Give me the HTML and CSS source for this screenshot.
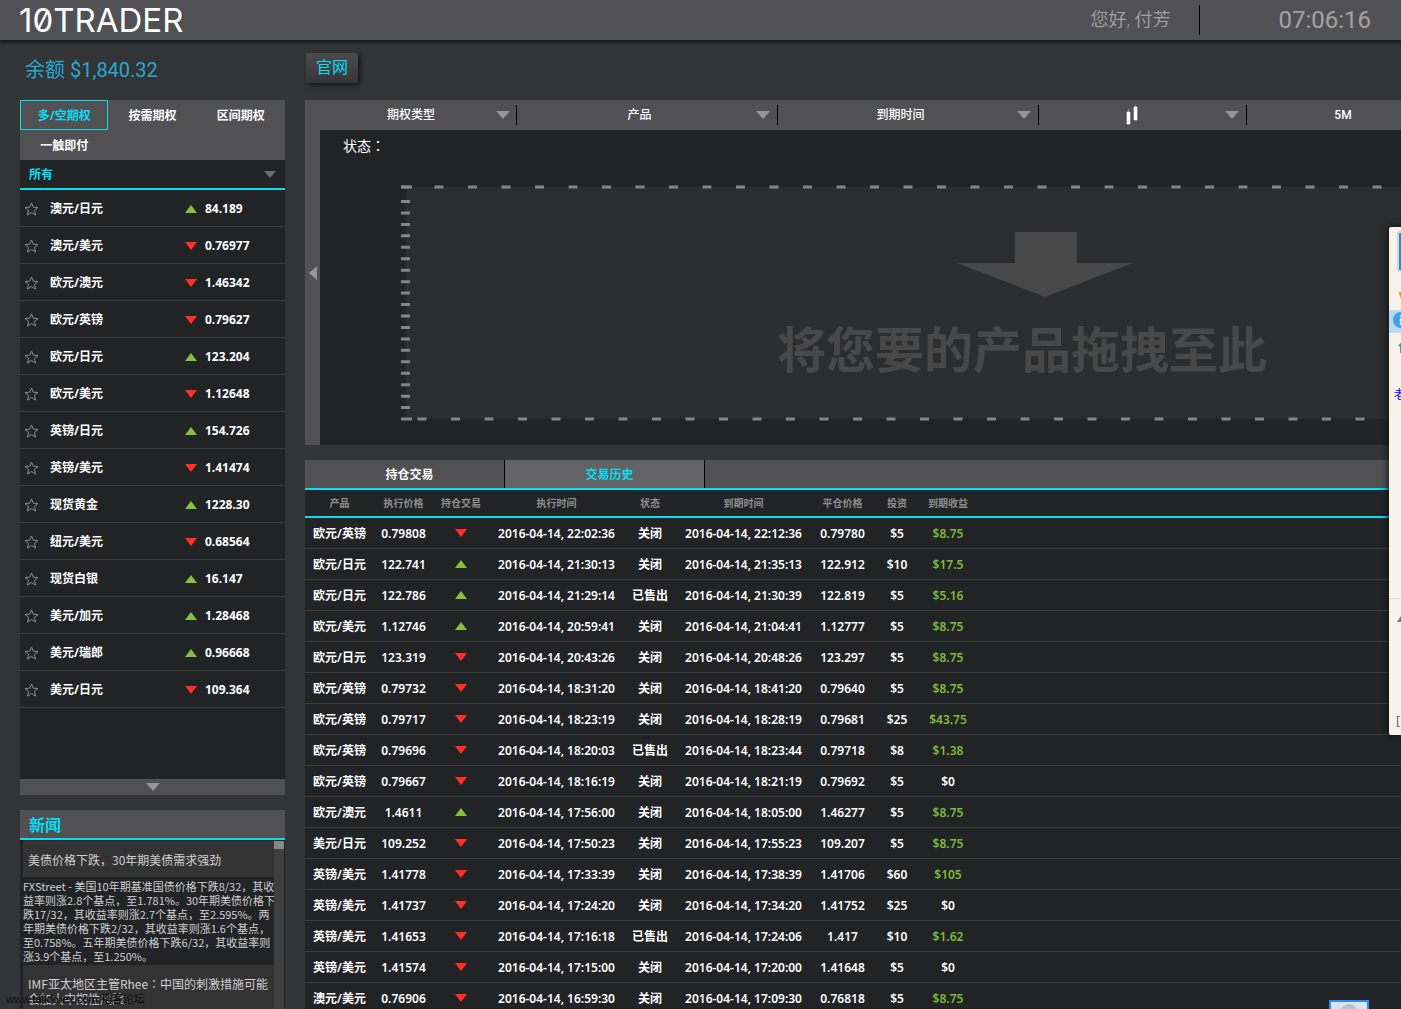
FILE: index.html
```html
<!DOCTYPE html>
<html lang="zh-CN">
<head>
<meta charset="utf-8">
<meta name="viewport" content="width=device-width, initial-scale=1">
<title>10TRADER</title>
<link rel="stylesheet" href="styles.css">
</head>
<body>
<header class="topbar">
  <a class="logo" href="#">10TRADER</a>
  <span class="greeting">您好, 付芳</span>
  <time class="clock">07:06:16</time>
</header>

<div class="layout">
  <aside class="sidebar">
    <div class="balance">余额 $1,840.32</div>

    <section class="assets">
      <nav class="types">
        <button class="type type-active">多/空期权</button>
        <button class="type">按需期权</button>
        <button class="type">区间期权</button>
        <button class="type">一触即付</button>
      </nav>
      <div class="filter">
        <select class="filter-select" aria-label="资产筛选"><option>所有</option></select>
        <svg class="filter-arrow" viewBox="0 0 12 7"><path d="M0 0H12L6 7Z"/></svg>
      </div>
      <ul class="quotes" id="quotes"></ul>
      <button class="more" aria-label="更多"><svg class="arrow" viewBox="0 0 14 8"><path d="M0 0H14L7 8Z"/></svg></button>
    </section>

    <section class="news">
      <h2 class="news-head">新闻</h2>
      <div class="news-body">
        <div class="news-list">
          <h3 class="news-title">美债价格下跌，30年期美债需求强劲</h3>
          <p class="news-text">FXStreet - 美国10年期基准国债价格下跌8/32，其收<br>益率则涨2.8个基点，至1.781%。30年期美债价格下<br>跌17/32，其收益率则涨2.7个基点，至2.595%。两<br>年期美债价格下跌2/32，其收益率则涨1.6个基点，<br>至0.758%。五年期美债价格下跌6/32，其收益率则<br>涨3.9个基点，至1.250%。</p>
          <h3 class="news-title">IMF亚太地区主管Rhee<span class="colon" lang="zh-TW">：</span>中国的刺激措施可能<br>会加大中期性风险</h3>
        </div>
        <div class="scroll"><div class="scroll-thumb"></div></div>
      </div>
    </section>
  </aside>

  <main class="main">
    <div class="site-row"><button class="site">官网</button></div>

    <section class="chart">
      <div class="tools">
        <div class="tool tool-first">
          <select class="tool-select" aria-label="期权类型"><option>期权类型</option></select>
          <svg class="arrow" viewBox="0 0 14 8"><path d="M0 0H14L7 8Z"/></svg>
        </div>
        <div class="tool">
          <select class="tool-select" aria-label="产品"><option>产品</option></select>
          <svg class="arrow" viewBox="0 0 14 8"><path d="M0 0H14L7 8Z"/></svg>
        </div>
        <div class="tool">
          <select class="tool-select" aria-label="到期时间"><option>到期时间</option></select>
          <svg class="arrow" viewBox="0 0 14 8"><path d="M0 0H14L7 8Z"/></svg>
        </div>
        <div class="tool tool-style">
          <button class="tool-icon" aria-label="图表样式">
            <svg width="12" height="20" viewBox="0 0 12 20"><path d="M2.500 4V7M9.500 0V3" stroke="#888" stroke-width="1"/><path d="M1 7H4V19H1ZM8 2H11V15H8Z" fill="#fff" stroke="#fff" stroke-width=".6"/></svg>
          </button>
          <svg class="arrow" viewBox="0 0 14 8"><path d="M0 0H14L7 8Z"/></svg>
        </div>
        <div class="tool tool-last">
          <select class="tool-select" aria-label="周期"><option>5M</option></select>
        </div>
      </div>
      <div class="stage">
        <button class="fold" aria-label="收起"><svg width="8" height="14" viewBox="0 0 8 14"><path d="M8 0V14L0 7Z"/></svg></button>
        <div class="canvas">
          <div class="status">状态<span class="colon" lang="zh-TW">：</span></div>
          <div class="drop">
            <svg class="dashes" width="100%" height="100%">
              <line x1="0" y1="2" x2="100%" y2="2" stroke-width="3" stroke-dasharray="9 24.500"/>
              <line x1="16.500" y1="234" x2="100%" y2="234" stroke-width="3" stroke-dasharray="9 24.500"/>
              <line x1="4.500" y1="15" x2="4.500" y2="225" stroke-width="9" stroke-dasharray="3 8.450"/>
              <line x1="0" y1="234" x2="11" y2="234" stroke-width="3"/>
              <line x1="0" y1="2" x2="11" y2="2" stroke-width="3"/>
            </svg>
            <div class="drop-body">
              <svg class="drop-arrow" width="176" height="66" viewBox="0 0 176 66"><path d="M58 0H120V31H176L88 65L0 31H58Z"/></svg>
              <p class="drop-text">将您要的产品拖拽至此</p>
            </div>
          </div>
        </div>
      </div>
    </section>

    <section class="trades">
      <nav class="trade-tabs">
        <button class="trade-tab">持仓交易</button>
        <button class="trade-tab trade-tab-active">交易历史</button>
      </nav>
      <table class="history">
        <colgroup><col class="c-name"><col class="c-strike"><col class="c-dir"><col class="c-time"><col class="c-state"><col class="c-time"><col class="c-close"><col class="c-stake"><col class="c-gain"><col></colgroup>
        <thead><tr><th>产品</th><th>执行价格</th><th>持仓交易</th><th>执行时间</th><th>状态</th><th>到期时间</th><th>平仓价格</th><th>投资</th><th>到期收益</th><th></th></tr></thead>
        <tbody id="history"></tbody>
      </table>
    </section>
  </main>
</div>

<div class="dock">
  <div class="dock-avatar"></div>
  <svg class="dock-mark" width="6" height="10" viewBox="0 0 6 10"><path d="M1 0H6V9Q1 6 1 0Z" fill="#d79a2b"/></svg>
  <div class="dock-info"><span class="dock-dot">i</span></div>
  <svg class="dock-mark" width="6" height="12" viewBox="0 0 6 14"><path d="M0 5L3 2V0H6V14H2V6H0Z" fill="#2f9d80"/></svg>
  <div class="dock-name">老</div>
  <div class="dock-foot">
    <svg width="4" height="6" viewBox="0 0 4 6"><path d="M4 0V6H0Z" fill="#777"/></svg>
    <span class="dock-bracket">[</span>
  </div>
</div>
<div class="chip"><div class="chip-dot"></div></div>
<div class="watermark">www.talkforex.com 韬客论坛</div>
<script src="app.js"></script>
</body>
</html>
```
FILE: styles.css
```css
* { box-sizing: border-box; }
body {
  margin: 0;
  height: 100vh;
  overflow: hidden;
  display: flex;
  flex-direction: column;
  background: #333436;
  color: #fff;
  font: 12px/20px "Noto Sans", "Noto Sans CJK SC", sans-serif;
}
button, select {
  appearance: none;
  margin: 0;
  padding: 0;
  border: 0;
  border-radius: 0;
  background: none;
  color: inherit;
  font: inherit;
}
h2, h3, p, ul { margin: 0; padding: 0; }
svg { display: block; }
.colon { font-family: "Noto Sans CJK TC", sans-serif; }

.topbar {
  flex: none;
  display: flex;
  align-items: center;
  height: 40px;
  padding: 0 30px 0 19px;
  background: #515153;
  box-shadow: 0 1px 4px 1px #111;
  color: #a3a3a5;
}
.logo {
  margin-right: auto;
  color: #fff;
  text-decoration: none;
  font: 33px/40px Inter, sans-serif;
  font-feature-settings: "zero" 1;
}
.greeting {
  padding-right: 29px;
  border-right: 1px solid #000;
  font: 18px/30px Roboto, "Noto Sans CJK SC", sans-serif;
  font-weight: 350;
}
.clock { margin-left: 78px; font: 24px/40px Roboto, sans-serif; }

.layout {
  flex: 1;
  min-height: 0;
  display: grid;
  grid-template-columns: 265px minmax(0, 1fr);
  gap: 20px;
  padding-left: 20px;
}
.balance {
  height: 60px;
  padding-left: 5px;
  color: #25a9d2;
  font: 20px/60px Roboto, "Noto Sans CJK SC", sans-serif;
}
.assets { background: #222325; }
.types {
  display: grid;
  grid-template-columns: repeat(3, 1fr);
  background: #515153;
  font-weight: 700;
}
.type { height: 30px; padding-top: 2px; }
.type-active { border: 1px solid #08dcf3; color: #08dcf3; }
.filter {
  display: flex;
  align-items: center;
  height: 30px;
  padding: 0 9px;
  border-bottom: 2px solid #08dcf3;
}
.filter-select { flex: 1; padding-top: 1px; color: #08dcf3; font-weight: 700; }
.filter-arrow { width: 12px; height: 7px; fill: #6a6a6c; }
.quotes { height: 589px; list-style: none; font-weight: 700; }
.quote {
  display: grid;
  grid-template-columns: 26px 135px 20px 1fr;
  align-items: center;
  height: 37px;
  padding: 1px 0 0 4px;
  border-bottom: 1px solid #3c3d3f;
}
.quote span { padding-top: 1px; }
.star { fill: none; stroke: #8e8e90; }
.up { fill: #86c13d; }
.down { fill: #ff3027; }
.more {
  display: flex;
  align-items: center;
  justify-content: center;
  width: 100%;
  height: 16px;
  background: #515153;
}
.arrow { flex: none; width: 14px; height: 8px; fill: #969698; }

.news { margin-top: 15px; background: #222325; }
.news-head {
  height: 30px;
  padding-left: 9px;
  border-bottom: 2px solid #08dcf3;
  background: #515153;
  color: #08dcf3;
  font: 700 16px/29px "Noto Sans CJK SC", sans-serif;
}
.news-body { display: flex; padding: 1px 1px 0 3px; }
.news-list { flex: 1; min-width: 0; color: #d0d0d0; white-space: nowrap; }
.news-title {
  padding: 11px 5px 10px;
  background: #333;
  font: 12px/15px "Noto Sans CJK SC", sans-serif;
}
.news-text {
  height: 88px;
  padding-top: 2px;
  font: 11px/14px "Noto Sans CJK SC", sans-serif;
}
.scroll { flex: none; width: 10px; background: #404041; }
.scroll-thumb { height: 8px; background: #888; }

.site-row { height: 60px; padding: 13px 1px; }
.site {
  width: 52px;
  height: 30px;
  padding-bottom: 3px;
  border-radius: 2px;
  background: linear-gradient(#4b4b4d, #363638);
  box-shadow: 2px 2px 4px #151515;
  color: #08dcf3;
  font-size: 16px;
}
.tools {
  display: grid;
  grid-template-columns: 212fr 261fr 261fr 208fr 154fr;
  height: 30px;
  padding: 5px 0;
  background: #515153;
  font-weight: 500;
}
.tool {
  display: flex;
  align-items: center;
  padding: 0 7px 0 6px;
  border-right: 1px solid #000;
}
.tool-first { padding: 0 6px 0 21px; }
.tool-style { padding-left: 0; }
.tool-last { padding: 0 0 0 38px; border: 0; font-family: Roboto, sans-serif; }
.tool-select { flex: 1; min-width: 0; text-align: center; text-align-last: center; }
.tool-icon { flex: 1; display: flex; justify-content: center; }
.stage { display: flex; height: 315px; }
.fold {
  width: 15px;
  display: flex;
  align-items: center;
  justify-content: center;
  padding-bottom: 30px;
  background: #515153;
}
.fold svg { fill: #969698; }
.canvas { flex: 1; min-width: 0; overflow: hidden; background: #222325; }
.status { height: 55px; padding: 5px 23px; font-size: 14px; }
.drop { position: relative; margin-left: 81px; height: 236px; padding: 2px 0 2px 5px; }
.dashes { position: absolute; left: 0; top: 0; stroke: #858585; }
.drop-body {
  width: 124%;
  height: 232px;
  padding: 45px 3px 0 0;
  background: #2c2d2f;
}
.drop-arrow { display: block; margin: 0 auto; padding-left: 0; translate: 24px 0; fill: #484848; }
.drop-text {
  margin-top: 14px;
  padding-left: 1px;
  color: #484848;
  text-align: center;
  font: 700 49px/70px "Noto Sans CJK SC", sans-serif;
}

.trades { margin-top: 15px; }
.trade-tabs {
  display: flex;
  height: 30px;
  border-bottom: 2px solid #08dcf3;
  background: #515153;
  font-weight: 700;
}
.trade-tab { width: 200px; padding: 2px 0 0 10px; border-right: 1px solid #000; }
.trade-tab-active { background: #636365; color: #08dcf3; }
.history {
  width: 100%;
  border-collapse: separate;
  border-spacing: 0;
  table-layout: fixed;
  background: #222325;
  font-weight: 600;
  text-align: center;
  white-space: nowrap;
}
.c-name { width: 69px; }
.c-strike { width: 59px; }
.c-dir { width: 56px; }
.c-time { width: 135px; }
.c-state { width: 52px; }
.c-close { width: 63px; }
.c-stake { width: 46px; }
.c-gain { width: 56px; }
th {
  height: 28px;
  padding: 0;
  border-bottom: 2px solid #08dcf3;
  color: #8e8e90;
  font-size: 10px;
  font-weight: 600;
}
td { height: 31px; padding: 2px 0 0; border-bottom: 1px solid #3c3d3f; }
td svg { margin: -2px auto 0; }
.gain { color: #7dbb3a; }

.dock {
  position: absolute;
  right: 0;
  top: 227px;
  width: 12px;
  height: 508px;
  display: flex;
  flex-direction: column;
  overflow: hidden;
  border-radius: 2px 0 0 2px;
  background: #f9f1eb;
  box-shadow: 0 0 6px 1px #111;
}
.dock-avatar {
  flex: none;
  width: 40px;
  height: 41px;
  margin: 4px 0 20px 8px;
  border: 2px solid #cfd8da;
  border-radius: 3px;
  background: #3f86ae;
}
.dock-mark { flex: none; align-self: flex-end; margin-right: -3px; }
.dock-info { flex: none; height: 23px; margin: 8px 0; padding: 2px 4px; background: #b8d8f5; }
.dock-dot {
  display: block;
  width: 16px;
  height: 16px;
  border-radius: 8px;
  background: #42a0e8;
  text-align: center;
  font: 700 13px/16px "Noto Sans", sans-serif;
}
.dock-name { margin: 32px 0 0 5px; color: #00f; white-space: nowrap; }
.dock-foot {
  display: flex;
  flex-direction: column;
  justify-content: space-between;
  align-items: flex-end;
  height: 137px;
  margin-top: auto;
  padding: 17px 0 4px;
  border-top: 1px solid #e3dcd6;
}
.dock-bracket { padding-right: 1px; color: #666; }
.chip {
  position: absolute;
  right: 32px;
  bottom: 0;
  width: 40px;
  height: 9px;
  padding: 2px 9px;
  overflow: hidden;
  border: 2px solid #2b8cff;
  border-bottom: 0;
  background: #dde3ee;
}
.chip-dot { width: 18px; height: 18px; border-radius: 9px; background: #b7c3d0; }
.watermark {
  position: absolute;
  left: 6px;
  bottom: 0;
  color: #000;
  text-shadow: 0 0 1px #777, 0 0 1px #000;
  white-space: nowrap;
  font: 11px/20px "Liberation Sans", "Noto Sans CJK SC", sans-serif;
}
```
FILE: app.js
```js
const quotes = [
  ["澳元/日元", "up", "84.189"],
  ["澳元/美元", "down", "0.76977"],
  ["欧元/澳元", "down", "1.46342"],
  ["欧元/英镑", "down", "0.79627"],
  ["欧元/日元", "up", "123.204"],
  ["欧元/美元", "down", "1.12648"],
  ["英镑/日元", "up", "154.726"],
  ["英镑/美元", "down", "1.41474"],
  ["现货黄金", "up", "1228.30"],
  ["纽元/美元", "down", "0.68564"],
  ["现货白银", "up", "16.147"],
  ["美元/加元", "up", "1.28468"],
  ["美元/瑞郎", "up", "0.96668"],
  ["美元/日元", "down", "109.364"]
];

const history = [
  ["欧元/英镑", "0.79808", "down", "22:02:36", "关闭", "22:12:36", "0.79780", "$5", "$8.75"],
  ["欧元/日元", "122.741", "up", "21:30:13", "关闭", "21:35:13", "122.912", "$10", "$17.5"],
  ["欧元/日元", "122.786", "up", "21:29:14", "已售出", "21:30:39", "122.819", "$5", "$5.16"],
  ["欧元/美元", "1.12746", "up", "20:59:41", "关闭", "21:04:41", "1.12777", "$5", "$8.75"],
  ["欧元/日元", "123.319", "down", "20:43:26", "关闭", "20:48:26", "123.297", "$5", "$8.75"],
  ["欧元/英镑", "0.79732", "down", "18:31:20", "关闭", "18:41:20", "0.79640", "$5", "$8.75"],
  ["欧元/英镑", "0.79717", "down", "18:23:19", "关闭", "18:28:19", "0.79681", "$25", "$43.75"],
  ["欧元/英镑", "0.79696", "down", "18:20:03", "已售出", "18:23:44", "0.79718", "$8", "$1.38"],
  ["欧元/英镑", "0.79667", "down", "18:16:19", "关闭", "18:21:19", "0.79692", "$5", "$0"],
  ["欧元/澳元", "1.4611", "up", "17:56:00", "关闭", "18:05:00", "1.46277", "$5", "$8.75"],
  ["美元/日元", "109.252", "down", "17:50:23", "关闭", "17:55:23", "109.207", "$5", "$8.75"],
  ["英镑/美元", "1.41778", "down", "17:33:39", "关闭", "17:38:39", "1.41706", "$60", "$105"],
  ["英镑/美元", "1.41737", "down", "17:24:20", "关闭", "17:34:20", "1.41752", "$25", "$0"],
  ["英镑/美元", "1.41653", "down", "17:16:18", "已售出", "17:24:06", "1.417", "$10", "$1.62"],
  ["英镑/美元", "1.41574", "down", "17:15:00", "关闭", "17:20:00", "1.41648", "$5", "$0"],
  ["澳元/美元", "0.76906", "down", "16:59:30", "关闭", "17:09:30", "0.76818", "$5", "$8.75"]
];

const star = '<svg class="star" width="15" height="14" viewBox="0 0 15 14"><path d="M7.500 1L9.300 5.200L14 5.500L10.400 8.500L11.600 13L7.500 10.600L3.400 13L4.600 8.500L1 5.500L5.700 5.200Z"/></svg>';
const triangle = dir => `<svg class="${dir}" width="12" height="8" viewBox="0 0 12 8"><path d="${dir === "up" ? "M0 8H12L6 0Z" : "M0 0H12L6 8Z"}"/></svg>`;

document.getElementById("quotes").innerHTML = quotes.map(([name, dir, price]) =>
  `<li class="quote">${star}<span>${name}</span>${triangle(dir)}<span>${price}</span></li>`).join("");

document.getElementById("history").innerHTML = history.map(([name, strike, dir, open, state, end, close, stake, gain]) =>
  `<tr><td>${name}</td><td>${strike}</td><td>${triangle(dir)}</td><td>2016-04-14, ${open}</td><td>${state}</td><td>2016-04-14, ${end}</td><td>${close}</td><td>${stake}</td><td class="${gain === "$0" ? "" : "gain"}">${gain}</td><td></td></tr>`).join("");
```
